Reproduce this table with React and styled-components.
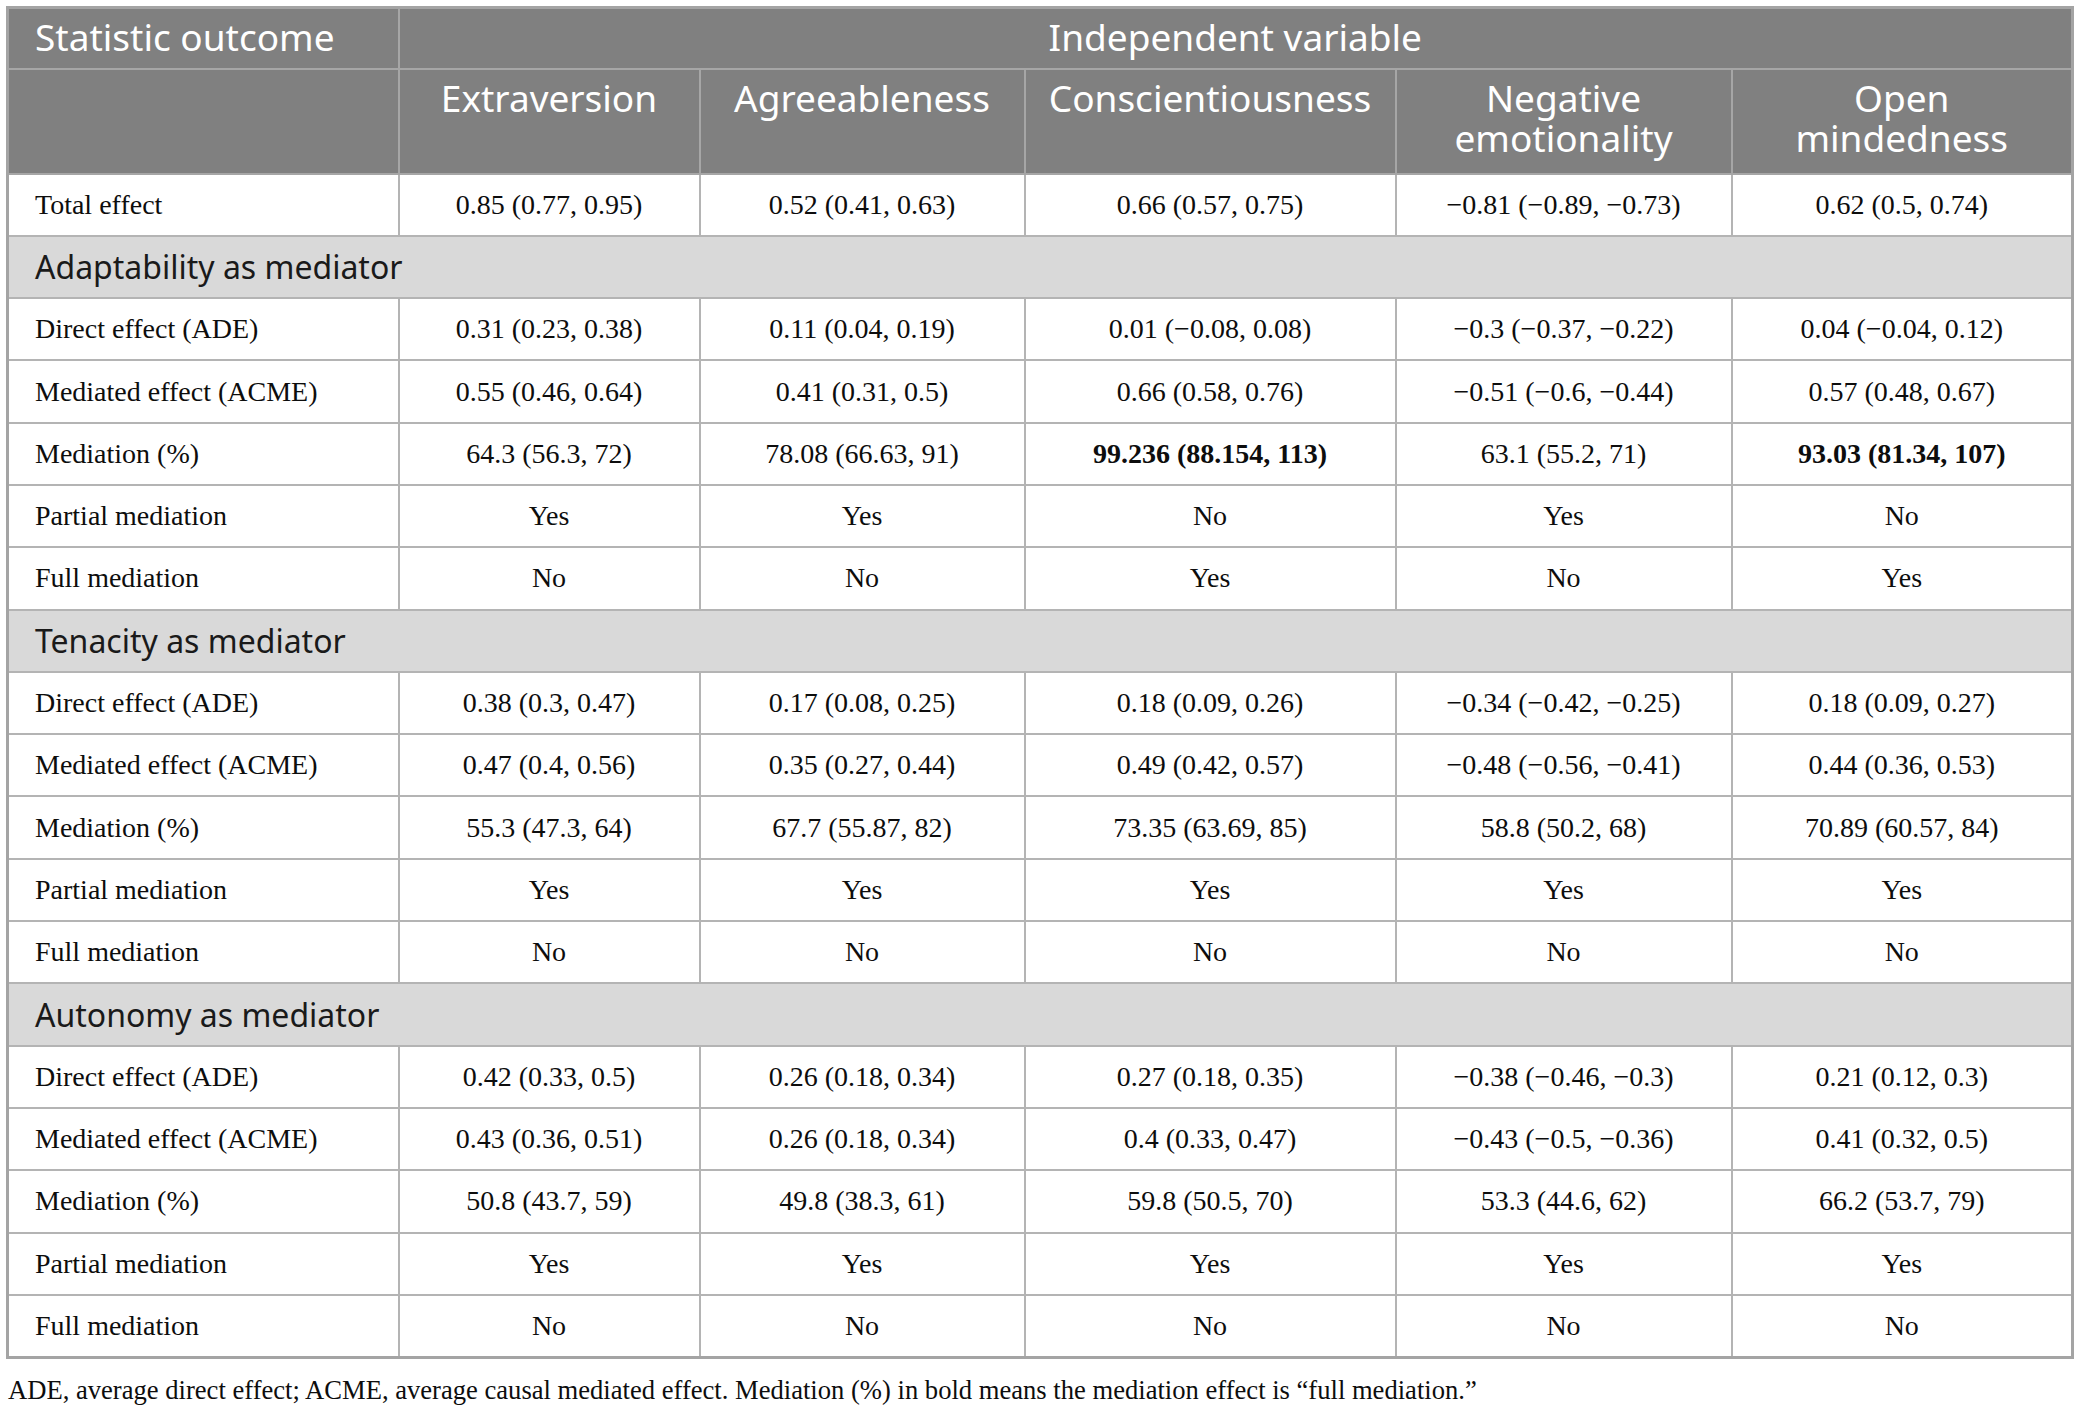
import React from "react";
import styled, { createGlobalStyle } from "styled-components";

const GlobalStyle = createGlobalStyle`
  body {
    margin: 0;
    background: #ffffff;
  }
`;

const M = "\u2212";

const sections = [
  {
    title: "Adaptability as mediator",
    rows: [
      ["Direct effect (ADE)", ["0.31 (0.23, 0.38)", "0.11 (0.04, 0.19)", `0.01 (${M}0.08, 0.08)`, `${M}0.3 (${M}0.37, ${M}0.22)`, `0.04 (${M}0.04, 0.12)`]],
      ["Mediated effect (ACME)", ["0.55 (0.46, 0.64)", "0.41 (0.31, 0.5)", "0.66 (0.58, 0.76)", `${M}0.51 (${M}0.6, ${M}0.44)`, "0.57 (0.48, 0.67)"]],
      ["Mediation (%)", ["64.3 (56.3, 72)", "78.08 (66.63, 91)", "**99.236 (88.154, 113)", "63.1 (55.2, 71)", "**93.03 (81.34, 107)"]],
      ["Partial mediation", ["Yes", "Yes", "No", "Yes", "No"]],
      ["Full mediation", ["No", "No", "Yes", "No", "Yes"]],
    ],
  },
  {
    title: "Tenacity as mediator",
    rows: [
      ["Direct effect (ADE)", ["0.38 (0.3, 0.47)", "0.17 (0.08, 0.25)", "0.18 (0.09, 0.26)", `${M}0.34 (${M}0.42, ${M}0.25)`, "0.18 (0.09, 0.27)"]],
      ["Mediated effect (ACME)", ["0.47 (0.4, 0.56)", "0.35 (0.27, 0.44)", "0.49 (0.42, 0.57)", `${M}0.48 (${M}0.56, ${M}0.41)`, "0.44 (0.36, 0.53)"]],
      ["Mediation (%)", ["55.3 (47.3, 64)", "67.7 (55.87, 82)", "73.35 (63.69, 85)", "58.8 (50.2, 68)", "70.89 (60.57, 84)"]],
      ["Partial mediation", ["Yes", "Yes", "Yes", "Yes", "Yes"]],
      ["Full mediation", ["No", "No", "No", "No", "No"]],
    ],
  },
  {
    title: "Autonomy as mediator",
    rows: [
      ["Direct effect (ADE)", ["0.42 (0.33, 0.5)", "0.26 (0.18, 0.34)", "0.27 (0.18, 0.35)", `${M}0.38 (${M}0.46, ${M}0.3)`, "0.21 (0.12, 0.3)"]],
      ["Mediated effect (ACME)", ["0.43 (0.36, 0.51)", "0.26 (0.18, 0.34)", "0.4 (0.33, 0.47)", `${M}0.43 (${M}0.5, ${M}0.36)`, "0.41 (0.32, 0.5)"]],
      ["Mediation (%)", ["50.8 (43.7, 59)", "49.8 (38.3, 61)", "59.8 (50.5, 70)", "53.3 (44.6, 62)", "66.2 (53.7, 79)"]],
      ["Partial mediation", ["Yes", "Yes", "Yes", "Yes", "Yes"]],
      ["Full mediation", ["No", "No", "No", "No", "No"]],
    ],
  },
];

const columns = [
  ["Extraversion"],
  ["Agreeableness"],
  ["Conscientiousness"],
  ["Negative", "emotionality"],
  ["Open", "mindedness"],
];

const widths = [391, 301, 325, 371, 336, 341];

function App() {
  return (
    <Page>
      <GlobalStyle />
      <Table>
        <colgroup>
          {widths.map((w, i) => (
            <col key={i} style={{ width: w }} />
          ))}
        </colgroup>
        <thead>
          <HeadRow $h={61}>
            <HeadCell $left>Statistic outcome</HeadCell>
            <HeadCell colSpan={5}>Independent variable</HeadCell>
          </HeadRow>
          <HeadRow $h={105}>
            <HeadCell />
            {columns.map((c, i) => (
              <HeadCell key={i}>
                {c.map((line, j) => (
                  <div key={j}>{line}</div>
                ))}
              </HeadCell>
            ))}
          </HeadRow>
        </thead>
        <tbody>
          <BodyRow>
            <LabelCell>Total effect</LabelCell>
            <ValueCell>0.85 (0.77, 0.95)</ValueCell>
            <ValueCell>0.52 (0.41, 0.63)</ValueCell>
            <ValueCell>0.66 (0.57, 0.75)</ValueCell>
            <ValueCell>{`${M}0.81 (${M}0.89, ${M}0.73)`}</ValueCell>
            <ValueCell>0.62 (0.5, 0.74)</ValueCell>
          </BodyRow>
          {sections.map((s) => (
            <React.Fragment key={s.title}>
              <BodyRow>
                <SectionCell colSpan={6}>{s.title}</SectionCell>
              </BodyRow>
              {s.rows.map(([label, vals]) => (
                <BodyRow key={label}>
                  <LabelCell>{label}</LabelCell>
                  {vals.map((v, i) => {
                    const bold = v.startsWith("**");
                    return (
                      <ValueCell key={i} $bold={bold}>
                        {bold ? v.slice(2) : v}
                      </ValueCell>
                    );
                  })}
                </BodyRow>
              ))}
            </React.Fragment>
          ))}
        </tbody>
      </Table>
      <Caption>
        ADE, average direct effect; ACME, average causal mediated effect. Mediation (%) in bold means the
        mediation effect is “full mediation.”
      </Caption>
    </Page>
  );
}

export default App;

const Page = styled.div`
  padding: 6px 6px 0 6px;
  width: 2066px;
`;

const Table = styled.table`
  width: 2066px;
  table-layout: fixed;
  border-collapse: collapse;
  border: 3px solid #a4a4a4;
`;

const HeadRow = styled.tr`
  height: ${(p) => p.$h}px;
  background: #808080;
`;

const HeadCell = styled.th`
  border: 2px solid #a6a6a6;
  padding: 8px 12px 0 ${(p) => (p.$left ? "26px" : "12px")};
  vertical-align: top;
  text-align: ${(p) => (p.$left ? "left" : "center")};
  font-family: "Noto Sans", "Open Sans", sans-serif;
  font-weight: 400;
  font-size: 37px;
  line-height: 40px;
  color: #ffffff;
  white-space: nowrap;
`;

const BodyRow = styled.tr`
  height: 62.3px;
`;

const LabelCell = styled.td`
  border: 2px solid #b4b4b4;
  padding: 0 10px 0 26px;
  text-align: left;
  vertical-align: middle;
  font-family: "Liberation Serif", "Times New Roman", serif;
  font-size: 28px;
  color: #0d0d0d;
  white-space: nowrap;
`;

const ValueCell = styled.td`
  border: 2px solid #b4b4b4;
  padding: 0 6px;
  text-align: center;
  vertical-align: middle;
  font-family: "Liberation Serif", "Times New Roman", serif;
  font-size: 28px;
  font-weight: ${(p) => (p.$bold ? 700 : 400)};
  color: #0d0d0d;
  white-space: nowrap;
`;

const SectionCell = styled.td`
  border: 2px solid #b4b4b4;
  background: #d9d9d9;
  padding: 0 26px;
  text-align: left;
  vertical-align: middle;
  font-family: "Noto Sans", "Open Sans", sans-serif;
  font-size: 32px;
  color: #1a1a1a;
`;

const Caption = styled.p`
  margin: 16px 0 0 2px;
  font-family: "Liberation Serif", "Times New Roman", serif;
  font-size: 26.6px;
  color: #0d0d0d;
`;
